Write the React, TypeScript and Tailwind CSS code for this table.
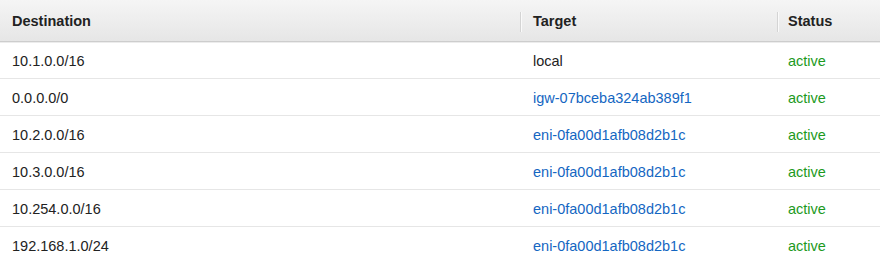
import React from 'react';

const routes = [
  { destination: '10.1.0.0/16', target: 'local', link: false },
  { destination: '0.0.0.0/0', target: 'igw-07bceba324ab389f1', link: true },
  { destination: '10.2.0.0/16', target: 'eni-0fa00d1afb08d2b1c', link: true },
  { destination: '10.3.0.0/16', target: 'eni-0fa00d1afb08d2b1c', link: true },
  { destination: '10.254.0.0/16', target: 'eni-0fa00d1afb08d2b1c', link: true },
  { destination: '192.168.1.0/24', target: 'eni-0fa00d1afb08d2b1c', link: true },
];

export default function App() {
  return (
    <div className="w-[880px] h-[261px] overflow-hidden bg-white text-[14.5px] text-[#222] font-['Liberation_Sans',Arial,sans-serif]">
      {/* Header */}
      <div className="flex h-[42px] items-center pt-[2px] bg-gradient-to-b from-[#f5f5f5] to-[#e6e6e6] border-b border-[#cdcdcd] shadow-[0_1px_0_#ececec]">
        <div className="w-[520px] pl-3 font-bold">Destination</div>
        <div className="flex w-[257px] items-center">
          <span className="h-5 w-px bg-[#d4d4d4] shadow-[1px_0_0_#fafafa]" />
          <span className="pl-3 font-bold">Target</span>
        </div>
        <div className="flex flex-1 items-center">
          <span className="h-5 w-px bg-[#d4d4d4] shadow-[1px_0_0_#fafafa]" />
          <span className="pl-[10px] font-bold">Status</span>
        </div>
      </div>

      {/* Rows */}
      {routes.map((r, i) => (
        <div key={i} className="flex h-[37px] items-center pt-[4px] border-b border-[#e6e6e6]">
          <div className="w-[520px] pl-3">{r.destination}</div>
          <div className={`w-[257px] pl-[13px] ${r.link ? 'text-[#1466c2]' : ''}`}>{r.target}</div>
          <div className="flex-1 pl-[11px] text-[#1d9a1d]">active</div>
        </div>
      ))}
    </div>
  );
}
